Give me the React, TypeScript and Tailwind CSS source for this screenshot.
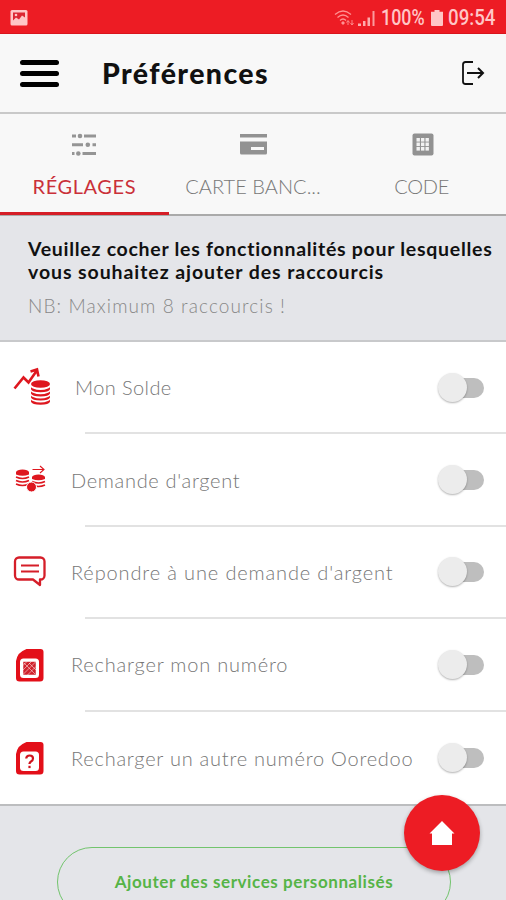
import type { ReactNode } from 'react'
import clsx from 'clsx'

const tabs = [
    { label: 'RÉGLAGES', icon: <TuneIcon />, active: true, tracking: 'tracking-[0.6px]' },
    { label: 'CARTE BANC...', icon: <CardIcon />, active: false, tracking: 'tracking-[0.05px]' },
    { label: 'CODE', icon: <KeypadIcon />, active: false, tracking: 'tracking-[-0.3px]' },
]

const shortcuts = [
    { label: 'Mon Solde', icon: <BalanceIcon />, text: 'ml-[15px] tracking-[0.4px]' },
    { label: "Demande d'argent", icon: <CoinsIcon />, text: 'ml-[11px] tracking-[0.68px]' },
    { label: "Répondre à une demande d'argent", icon: <MessageIcon />, text: 'ml-[11px] tracking-[0.86px]' },
    { label: 'Recharger mon numéro', icon: <SimIcon><SimChip /></SimIcon>, text: 'ml-[11px] tracking-[0.8px]' },
    { label: 'Recharger un autre numéro Ooredoo', icon: <SimIcon><SimQuestion /></SimIcon>, text: 'ml-[11px] tracking-[0.76px]' },
]

function TuneIcon() {
    return (
        <svg width="24" height="24" viewBox="0 0 24 24" fill="#959595">
            <path d="M0 1.500h4v3H0zM12 1.500h12v3H12zM0 10.200h11v3H0zM20.500 10.200h3.500v3h-3.500zM0 19h2.500v3H0zM10.500 19H24v3H10.500z" />
            <circle cx="8" cy="3" r="2.300" />
            <circle cx="15.800" cy="11.700" r="2.300" />
            <circle cx="6.300" cy="20.500" r="2.300" />
        </svg>
    )
}

function CardIcon() {
    return (
        <svg className="translate-x-px" width="27" height="24" viewBox="0 0 27 24" fill="#929292">
            <path d="M0 1h27v3.500H0z" />
            <path fillRule="evenodd" d="M0 8.500h27v11.500q0 1.500-1.500 1.500h-24Q0 21.500 0 20zM11 14v3h13v-3z" />
        </svg>
    )
}

function KeypadIcon() {
    return (
        <svg className="translate-x-px" width="22" height="24" viewBox="0 0 22 24">
            <rect x="0.500" y="0.500" width="21" height="22" rx="2" fill="#929292" />
            {[5, 9.5, 14].map((y) =>
                [4.5, 9, 13.5].map((x) => <rect key={`${x}-${y}`} x={x} y={y} width="3.400" height="3.600" fill="#f2f2f2" />)
            )}
        </svg>
    )
}

function BalanceIcon() {
    return (
        <svg width="44" height="44" viewBox="0 0 44 44" fill="none" stroke="#de171f">
            <path d="M7.500 22.500l9-11 5 5 8-11.500M23.500 5.500l6.500-2 1.500 7" strokeWidth="2.600" />
            <ellipse cx="33.500" cy="18" rx="9.500" ry="3.800" fill="#de171f" stroke="none" />
            {[21, 25.2, 29.4, 33.6].map((y) => (
                <path key={y} d={`M24 ${y}q0 .5 2 1.500q7.500 3 15 0q2-1 2-1.500v2.200q-1 3-9.500 3t-9.500-3z`} fill="#de171f" stroke="none" />
            ))}
        </svg>
    )
}

function CoinsIcon() {
    return (
        <svg width="44" height="44" viewBox="0 0 44 44" fill="none" stroke="#de171f">
            <path d="M25.500 11.500h11M33 8l4 3.500-4 3.500" strokeWidth="1.100" />
            <path d="M9 14q1-2.500 6.500-2.500T22 14v2.500q-6.500 2.500-13 0zM25 19q1-2.500 6.500-2.500T38 19v2q-6.500 2.500-13 0z" fill="#de171f" stroke="none" />
            {[19, 22.5, 26].map((y) => (
                <path key={y} d={`M9 ${y}q6.500 3 13 0`} strokeWidth="1.500" />
            ))}
            {[23.5, 27].map((y) => (
                <path key={y} d={`M25 ${y}q6.500 3 13 0`} strokeWidth="1.500" />
            ))}
            <circle cx="24.500" cy="29" r="5" fill="#de171f" stroke="#fff" />
        </svg>
    )
}

function MessageIcon() {
    return (
        <svg width="44" height="44" viewBox="0 0 44 44" fill="none" stroke="#d51e29">
            <path d="M12 7.500h21.500a4 4 0 0 1 4 4v14a4 4 0 0 1-4 4h-.5v5.500l-7-5.500H12a4 4 0 0 1-4-4v-14a4 4 0 0 1 4-4z" strokeWidth="2.300" strokeLinejoin="round" />
            <path d="M14 15.500h18M14 21.500h18" strokeWidth="2" />
        </svg>
    )
}

function SimIcon({ children }: { children: ReactNode }) {
    return (
        <svg className="-translate-x-px" width="44" height="44" viewBox="0 0 44 44">
            <path d="M20.500 6h14a3 3 0 0 1 3 3v26a3.500 3.500 0 0 1-3.500 3.500H13.500A3.500 3.500 0 0 1 10 35V18Q11.500 9 20.500 6z" fill="#e30f19" />
            <rect x="14" y="15.500" width="19" height="19.500" rx="3.500" fill="#fff" />
            {children}
        </svg>
    )
}

function SimChip() {
    return (
        <g fill="none" stroke="#fff" strokeWidth="0.500">
            <rect x="17" y="18.500" width="13" height="13.500" fill="#d0222c" />
            <path d="M17 22.500l4-4M17 27l8.500-8.500M17 31.500l13-13M21.500 32l8.500-8.500M18 20l11 11M23 20l7 7" />
        </g>
    )
}

function SimQuestion() {
    return (
        <g fill="none" stroke="#d0121c" strokeWidth="2.200">
            <path d="M20.200 22.500q.3-3 3.500-3 3.300 0 3.300 3 0 1.900-2 3-1.500.8-1.500 2.500" />
            <path d="M23.500 29.800v2.300" />
        </g>
    )
}

function Switch() {
    return (
        <div className="relative h-[29px] w-[46px] shrink-0">
            <div className="absolute top-[5px] right-0 h-[20px] w-[34px] rounded-full bg-[#bebebe]" />
            <div className="absolute top-0 left-0 size-[29px] rounded-full bg-[#ececec] shadow-[0_1px_2px_rgba(0,0,0,0.3)]" />
        </div>
    )
}

function StatusBar() {
    return (
        <div className="flex h-[34px] shrink-0 items-center border-b border-[#d9151d] bg-[#ed1c24] pt-[2px] pr-[10px] pl-[10px] text-[#ffc6c6]">
            <svg width="18" height="18" viewBox="0 0 18 18">
                <rect x="0.500" y="1" width="17" height="15.500" rx="1.500" fill="#ffc6c6" />
                <path d="M3 3.500h12v5l-3-2-3 4-3-2-3 3z" fill="#dc2632" />
                <circle cx="6" cy="6" r="1.300" fill="#ffc6c6" />
            </svg>
            <svg className="ml-auto" width="22" height="18" viewBox="0 0 22 18" fill="none" stroke="#ff9292" strokeWidth="1.300">
                <path d="M1 5.500q8-7 16 0M3.500 8.500q5.500-5 11 0M6 11.500q3-3 6 0" />
                <path d="M7 14l2-2 2 2-2 2z" fill="#ff9292" stroke="none" />
                <path d="M14 16v-4M12.500 13.500l1.500-2 1.500 2M18 11v5M16.500 14l1.500 2 1.500-2" strokeWidth="0.900" />
            </svg>
            <svg className="ml-[2px]" width="19" height="18" viewBox="0 0 19 18" fill="#ffc6c6">
                <path d="M0 14.500h3V17H0zM5 12h2.500v5H5zM9.500 8.500H12V17H9.500z" opacity=".85" />
                <path d="M14.500 2h2v15h-2z" opacity=".75" />
            </svg>
            <span className="ml-[4px] w-[46px] origin-left scale-x-[0.83] whitespace-nowrap font-['Roboto'] text-[21.5px] leading-none font-medium">100%</span>
            <svg className="ml-[4px]" width="12" height="18" viewBox="0 0 12 19" fill="#ffc6c6" preserveAspectRatio="none">
                <path d="M3.500 1h5v2H12v14q0 1-1 1H1q-1 0-1-1V3h3.500z" />
            </svg>
            <span className="ml-[5px] w-[48px] origin-left scale-x-[0.87] whitespace-nowrap font-['Roboto'] text-[21.5px] leading-none font-medium">09:54</span>
        </div>
    )
}

export default function App() {
    return (
        <div className="relative flex h-[900px] w-[506px] flex-col overflow-hidden bg-[#e4e5e9] font-['Lato',sans-serif]">
            <StatusBar />

            <header className="flex h-[80px] shrink-0 items-center border-b-2 border-[#c9c9c9] bg-[#f8f8f8] pr-[21px] pl-[20px]">
                <button className="flex w-[39px] flex-col gap-[6px]">
                    <span className="h-[5px] rounded-full bg-black" />
                    <span className="h-[5px] rounded-full bg-black" />
                    <span className="h-[5px] rounded-full bg-black" />
                </button>
                <h1 className="ml-[43px] whitespace-nowrap text-[28.5px] leading-none font-black tracking-[1.4px] text-[#111]">Préférences</h1>
                <svg className="ml-auto" width="24" height="26" viewBox="0 0 24 26" fill="none" stroke="#111" strokeWidth="2">
                    <path d="M12 2H4.500Q2 2 2 4.500v17Q2 24 4.500 24H12" strokeWidth="1.800" />
                    <path d="M6 13h16M17 8l5 5-5 5" />
                </svg>
            </header>

            <nav className="grid h-[102px] shrink-0 grid-cols-3 border-b-2 border-[#aaa] bg-[#f8f8f8]">
                {tabs.map((tab) => (
                    <button
                        key={tab.label}
                        className={clsx('-mb-px flex flex-col items-center pt-[19px]', tab.active && 'border-b-3 border-[#d51e27]')}
                    >
                        {tab.icon}
                        <span
                            className={clsx('mt-[17px] whitespace-nowrap text-[20px] leading-[24px]', tab.tracking, tab.active ? 'text-[#ca3039]' : 'font-light text-[#777]')}
                        >
                            {tab.label}
                        </span>
                    </button>
                ))}
            </nav>

            <section className="h-[126px] shrink-0 border-b-2 border-[#c8c9cb] pt-[22px] pl-[28px]">
                <p className="whitespace-nowrap text-[19.5px] leading-[22.5px] font-bold text-[#111]">
                    <span className="tracking-[0.72px]">Veuillez cocher les fonctionnalités pour lesquelles</span>
                    <br />
                    <span className="tracking-[0.92px]">vous souhaitez ajouter des raccourcis</span>
                </p>
                <p className="mt-[11px] whitespace-nowrap text-[19px] leading-[23px] font-light tracking-[1.1px] text-[#888]">NB: Maximum 8 raccourcis !</p>
            </section>

            <ul className="grid h-[464px] shrink-0 grid-rows-5 border-b-2 border-[#bcbdbf] bg-white">
                {shortcuts.map((item, i) => (
                    <li key={item.label} className="flex flex-col">
                        <div className="flex flex-1 items-center pr-[22px] pl-[7px]">
                            <span className="w-[53px] shrink-0 pt-px">{item.icon}</span>
                            <span className={clsx('whitespace-nowrap text-[20px] leading-none font-light text-[#777]', item.text)}>{item.label}</span>
                            <div className="ml-auto">
                                <Switch />
                            </div>
                        </div>
                        {i < shortcuts.length - 1 && <div className="ml-[85px] h-[2px] bg-[#e2e2e2]" />}
                    </li>
                ))}
            </ul>

            <button className="mt-[41px] ml-[57px] h-[70px] w-[394px] shrink-0 rounded-[35px] border-[1.5px] border-[#72c46d] whitespace-nowrap text-[17px] font-bold tracking-[0.58px] text-[#56b447]">
                Ajouter des services personnalisés
            </button>

            <button className="absolute top-[795px] left-[404px] flex size-[76px] items-center justify-center rounded-full bg-[#ed1c24] shadow-[0_2px_4px_rgba(0,0,0,0.3)]">
                <svg width="26" height="26" viewBox="0 0 26 26" fill="#fff">
                    <path d="M13 1L25.500 13.500H23V25H3V13.500H.5z" />
                </svg>
            </button>
        </div>
    )
}
